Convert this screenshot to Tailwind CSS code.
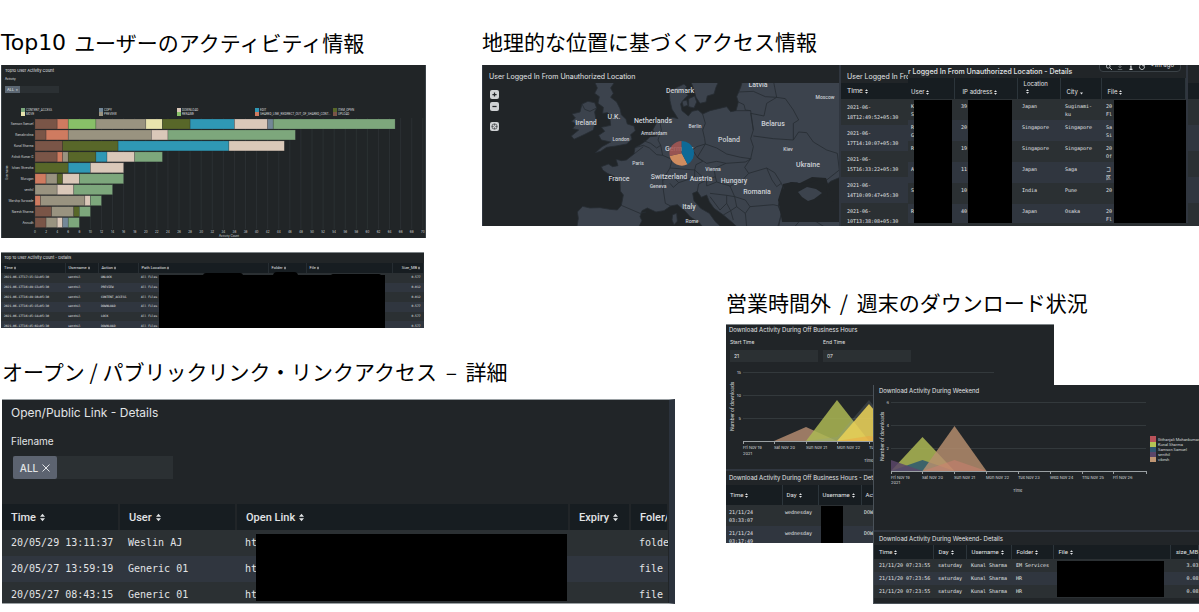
<!DOCTYPE html>
<html lang="ja">
<head>
<meta charset="utf-8">
<title>アクティビティ ダッシュボード</title>
<script src="https://cdn.jsdelivr.net/npm/@tailwindcss/browser@4"></script>
</head>
<body class="bg-white font-['Inter','Noto_Sans_CJK_JP',sans-serif] text-[#e2e4e6] overflow-x-hidden">
<svg class="hidden" aria-hidden="true">
  <symbol id="sort" viewBox="0 0 6 10"><path d="M0 4 3 0.500 6 4ZM0 6h6L3 9.500Z" fill="#e2e4e6"/></symbol>
  <symbol id="desc" viewBox="0 0 6 10"><path d="M0 5h6L3 9Z" fill="#e2e4e6"/></symbol>
</svg>
<main class="grid grid-cols-[482fr_244fr_473fr] grid-rows-[280px_64px_auto]">

  <!-- Top 10 user activity -->
  <section class="col-start-1 row-start-1 row-span-2 min-w-0 pt-5 pl-px pr-14">
    <h2 class="h-[45px] flex items-center text-[21px] leading-none text-black whitespace-nowrap gap-2"><span class="font-['DejaVu_Sans',sans-serif] text-[22px]">Top10</span> <span class="font-['Noto_Sans_CJK_JP',sans-serif]">ユーザーのアクティビティ情報</span></h2>
    <div class="bg-[#212527] border-x border-[#3b4247] h-[173px]">
      <div class="pl-[3px] pt-[3px] text-[4px] leading-[5px]">
        <h3>Top10 User Activity Count</h3>
        <label for="activity" class="block mt-1 text-[3px]">Activity</label>
        <div class="mt-1 w-[54px] h-[7px] bg-[#2b3033] flex">
          <button class="w-[15px] bg-[#5c6773] text-[4px] leading-none flex items-center justify-center gap-px shrink-0">ALL ×</button>
          <input id="activity" class="w-full min-w-0 bg-transparent outline-none">
        </div>
      </div>
      <svg id="bars" class="block w-full" viewBox="2 93 423 145" font-size="3" fill="#d5d8da"></svg>
    </div>

    <div class="relative mt-[14px] mr-[2px] h-[76px] bg-[#212527] border-t border-[#7e8487] overflow-hidden">
      <h3 class="h-[10px] pl-[3px] flex items-center text-[4px] leading-none">Top 10 User Activity Count - Details</h3>
      <table class="w-full h-[68px] table-fixed text-left text-[3px] leading-none font-['DejaVu_Sans_Mono',monospace] whitespace-nowrap [&_td]:px-[3px] [&_th]:px-[3px] [&_th]:font-normal [&_th]:border-r [&_th]:border-[#262d32] [&_tbody_tr:nth-child(odd)]:bg-[#2b3033] [&_tbody_tr:nth-child(even)]:bg-[#30363f]">
        <colgroup><col class="w-[64px]"><col class="w-[33px]"><col class="w-[40px]"><col class="w-[130px]"><col class="w-[38px]"><col class="w-[86px]"><col></colgroup>
        <thead class="bg-[#171d21] font-['Roboto',sans-serif] text-[4px]"><tr class="h-[10px]">
          <th><button class="flex gap-px items-center">Time<svg class="w-[2px] h-[4px]"><use href="#sort"/></svg></button></th>
          <th><button class="flex gap-px items-center">Username<svg class="w-[2px] h-[4px]"><use href="#sort"/></svg></button></th>
          <th><button class="flex gap-px items-center">Action<svg class="w-[2px] h-[4px]"><use href="#sort"/></svg></button></th>
          <th><button class="flex gap-px items-center">Path Location<svg class="w-[2px] h-[4px]"><use href="#sort"/></svg></button></th>
          <th><button class="flex gap-px items-center">Folder<svg class="w-[2px] h-[4px]"><use href="#sort"/></svg></button></th>
          <th><button class="flex gap-px items-center">File<svg class="w-[2px] h-[4px]"><use href="#sort"/></svg></button></th>
          <th><button class="flex gap-px items-center ml-auto">Size_MB<svg class="w-[2px] h-[4px]"><use href="#sort"/></svg></button></th>
        </tr></thead>
        <tbody>
          <tr><td>2021-06-17T17:15:32+05:30</td><td>senthil</td><td>UNLOCK</td><td>All Files</td><td></td><td></td><td class="text-right">0.577</td></tr>
          <tr><td>2021-06-17T16:49:13+05:30</td><td>senthil</td><td>PREVIEW</td><td>All Files</td><td></td><td></td><td class="text-right">0.012</td></tr>
          <tr><td>2021-06-17T16:49:10+05:30</td><td>senthil</td><td>CONTENT_ACCESS</td><td>All Files</td><td></td><td></td><td class="text-right">0.012</td></tr>
          <tr><td>2021-06-17T16:45:15+05:30</td><td>senthil</td><td>DOWNLOAD</td><td>All Files</td><td></td><td></td><td class="text-right">0.577</td></tr>
          <tr><td>2021-06-17T16:45:14+05:30</td><td>senthil</td><td>LOCK</td><td>All Files</td><td></td><td></td><td class="text-right">0.577</td></tr>
          <tr><td>2021-06-17T16:45:02+05:30</td><td>senthil</td><td>DOWNLOAD</td><td>All Files</td><td></td><td></td><td class="text-right">0.577</td></tr>
        </tbody>
      </table>
      <div class="absolute left-[158px] right-[39px] top-[22px] bottom-0 bg-black"></div>
      <div class="absolute left-[202px] w-[40px] top-[20px] h-[3px] rounded-t bg-black"></div>
      <div class="absolute left-[272px] w-[25px] top-[19px] h-[4px] rounded-t bg-black"></div>
      <div class="absolute left-[330px] w-[50px] top-[21px] h-[2px] rounded-t bg-black"></div>
    </div>
  </section>

  <!-- Access by geographic location -->
  <section class="col-start-2 col-span-2 row-start-1 min-w-0 pt-5">
    <h2 class="h-[45px] flex items-center text-[21px] leading-none text-black whitespace-nowrap">地理的な位置に基づくアクセス情報</h2>
    <div class="flex h-[161px] bg-[#30363f]">
      <div class="relative basis-1/2 bg-[#212528] border-x border-[#30363f] overflow-hidden">
        <h3 class="h-[18px] pl-1.5 pt-1 flex items-center text-[7px] leading-none">User Logged In From Unauthorized Location</h3>
        <svg class="block w-full font-['Roboto',sans-serif]" viewBox="483 83 356 143">
          <g transform="translate(560 80) scale(.33333)" fill="#3c434d" stroke="#272c33" stroke-width="2.5" stroke-linejoin="round">
            <path d="M50 445 55 415 52 396 68 379 90 384 120 383 150 388 172 390 184 376 190 345 181 333 180 302 160 288 142 280 128 270 124 260 145 252 158 260 174 257 168 238 185 242 199 240 222 222 225 203 240 195 258 182 270 170 292 168 278 150 290 128 312 118 338 112 354 116 344 100 336 88 330 62 328 40 345 25 372 12 380 20 372 35 385 45 372 58 362 72 366 92 385 108 396 94 414 90 428 102 450 92 475 86 500 80 512 95 528 92 535 66 530 50 542 22 548 0H845V290L812 304 796 318 776 328 792 335 800 330 812 345 830 360 845 390V445H652L664 402 655 376 664 350 672 328 690 310 712 308 722 318 700 330 722 344 738 358 758 352 775 345 764 335 745 325 780 310 800 300 770 305 735 322 714 310 690 308 674 326 664 352 655 378 664 402 655 445H536L514 425 490 405 462 385 448 365 440 345 424 352 412 334 398 340 402 362 422 385 448 400 466 425 488 445H432L416 426 392 412 374 392 352 374 332 378 312 392 288 396 262 384 246 392 240 410 246 422 234 445Z"/>
            <path d="M104 6H164L152 24 160 40 152 52 170 66 180 86 184 104 198 118 202 132 222 138 226 152 212 164 216 178 200 192 168 198 140 202 122 214 106 218 126 200 152 186 124 180 116 166 134 154 124 142 152 136 150 118 158 110 142 98 128 100 130 82 114 70 118 50 104 40 112 24Z"/>
            <path d="M66 72 84 64 104 68 110 84 104 96 108 120 100 150 72 164 42 178 34 168 56 150 38 146 48 132 34 124 46 114 36 102 60 96Z"/>
            <path d="M392 4H476L468 22 462 42 442 48 438 66 420 70 408 52 402 30ZM386 56 404 48 410 66 402 84 386 80ZM366 64 380 60 384 76 370 80ZM338 404 350 400 352 424 342 434 336 420ZM700 445 718 424 744 416 770 426 800 445Z"/>
          </g>
          <path d="M796 185 812 177 826 178 830 190 839 200V210L822 205 806 200 800 208 786 204 780 195Z" fill="#212528"/>
          <path d="M783 184 792 182 806 184 818 180 826 186 828 197 839 206V222H782L780 210 778 200Z" fill="#212528"/>
          <path d="M798 192 807 187 816 189 822 193 814 199 808 201 802 197Z" fill="#3c434d"/>
          <g transform="translate(560 80) scale(.33333)" fill="none" stroke="#272c33" stroke-width="2.5" stroke-linejoin="round">
            <path d="M428 102 436 130 428 150 434 176 436 192 410 200 398 210 412 232 428 244 408 254 404 270 330 264 336 238 308 226 302 196 294 180 304 150 300 128M436 192 470 204 500 222 542 232 572 236 580 200 572 176 580 150 572 92 528 92M436 192 412 232 440 250 470 244 498 250 556 246 574 236M404 270 420 284 440 300 466 290 462 266 498 250M466 290 470 306 510 318 548 300 566 280 554 262 572 236M440 300 416 312 412 334M440 300 440 318 470 306M510 318 524 350 556 360 570 380 640 374 656 378M566 280 620 264 644 278 664 310 672 328M620 264 636 300 650 320 664 310M580 168 640 176 700 180 716 156 740 158 760 186 800 210 832 220 838 270 800 300M580 150 572 100 612 108 620 70 650 52 676 56 700 90 716 120 700 130 700 180M535 36 580 34 616 50 650 52 644 22 640 0M535 66 552 74 556 90 572 92M225 203 250 196 268 204 290 224 308 226M250 182 272 190 290 204 302 196M222 222 250 200M330 264 308 300 310 330 316 370 332 378M308 300 340 292 356 308 380 300 404 290 404 270M356 308 340 322 330 310M184 376 240 400 258 396M110 84 90 94 74 88 66 72M450 340 500 346 500 370 480 390 450 350M524 350 500 346M500 370 512 392 490 405M512 392 530 380 556 400 560 440M530 380 524 350M556 400 570 380M512 392 520 420"/>
          </g>
          <g font-weight="500" font-size="7" text-anchor="middle" fill="#cdd1d6">
            <text x="680" y="93">Denmark</text><text x="758" y="87">Latvia</text>
            <text x="586" y="125">Ireland</text><text x="614" y="119">U.K.</text>
            <text x="653" y="123">Netherlands</text><text x="773" y="126">Belarus</text>
            <text x="729" y="142">Poland</text><text x="679" y="151">Germany</text>
            <text x="808" y="167">Ukraine</text><text x="619" y="181">France</text>
            <text x="669" y="179">Switzerland</text><text x="701" y="181">Austria</text>
            <text x="734" y="183">Hungary</text><text x="757" y="194">Romania</text>
            <text x="689" y="209">Italy</text>
            <g font-size="5">
              <text x="825" y="99">Moscow</text><text x="695" y="128">Berlin</text><text x="654" y="135">Amsterdam</text>
              <text x="621" y="141">London</text><text x="638" y="165">Paris</text><text x="788" y="151">Kiev</text>
              <text x="713" y="171">Vienna</text><text x="658" y="188">Geneva</text><text x="692" y="223">Rome</text>
            </g>
          </g>
          <path d="M681.700 153.300 687.500 164.200A12.300 12.300 0 0 1 669.700 156Z" fill="#cf8c5f"/>
          <path d="M681.700 153.300 669.700 156A12.300 12.300 0 0 1 681.700 141Z" fill="#a55753" fill-opacity=".88"/>
          <path d="M681.700 153.300V141A12.300 12.300 0 0 1 687.500 164.200Z" fill="#0e6a97"/>
        </svg>
        <div class="absolute left-[7px] top-[25px] flex flex-col gap-[3px]">
          <button aria-label="Zoom in" class="size-[9px] rounded-xs bg-[#cfd2d4] flex items-center justify-center"><svg class="size-[5px]" viewBox="0 0 6 6"><path d="M3 .5v5M.5 3h5" stroke="#212528" stroke-width="1.500"/></svg></button>
          <button aria-label="Zoom out" class="size-[9px] rounded-xs bg-[#cfd2d4] flex items-center justify-center"><svg class="size-[5px]" viewBox="0 0 6 6"><path d="M.5 3h5" stroke="#212528" stroke-width="1.500"/></svg></button>
          <button aria-label="Reset view" class="mt-[8px] size-[9px] rounded-xs bg-[#cfd2d4] flex items-center justify-center"><svg class="size-[7px]" viewBox="0 0 8 8" fill="none" stroke="#212528"><circle cx="4" cy="4" r="3" stroke-width=".7"/><path d="M4 1v2M4 5v2M1 4h2M5 4h2" stroke-width=".7"/></svg></button>
        </div>
      </div>

      <div class="relative basis-1/2 ml-px bg-[#212528] overflow-hidden">
        <h3 class="h-[18px] pl-[6px] pt-1 flex items-center text-[7px] leading-none whitespace-nowrap">User Logged In From</h3>
        <table class="w-full table-fixed text-left text-[5px] leading-[10px] font-['DejaVu_Sans_Mono',monospace] [&_td]:pl-[6px] [&_td]:align-top [&_td]:pt-[3px] [&_tbody_tr]:h-[26px] [&_tbody_tr:nth-child(odd)]:bg-[#2b3033] [&_tbody_tr:nth-child(even)]:bg-[#30363f]">
          <thead class="bg-[#171d21] font-['Roboto',sans-serif] text-[7px]"><tr class="h-[16px]"><th class="pl-[6px] font-normal"><button class="flex gap-0.5 items-center leading-none">Time<svg class="w-[3px] h-[5px]"><use href="#sort"/></svg></button></th></tr></thead>
          <tbody>
            <tr><td>2021-06-<br>18T12:49:52+05:30</td></tr>
            <tr><td>2021-06-<br>17T14:10:07+05:30</td></tr>
            <tr><td>2021-06-<br>15T16:33:22+05:30</td></tr>
            <tr><td>2021-06-<br>14T10:09:47+05:30</td></tr>
            <tr><td>2021-06-<br>10T13:38:08+05:30</td></tr>
          </tbody>
        </table>
        <div class="absolute left-[67px] right-[11px] top-0 h-[158px] bg-[#212528] overflow-hidden border-r-2 border-[#30363f]">
          <h3 class="h-[13px] flex items-center text-[7px] leading-none font-medium whitespace-nowrap">r Logged In From Unauthorized Location - Details</h3>
          <div class="absolute right-[5px] -top-[8px] w-[82px] h-[15px] rounded-sm border border-[#3b4247] bg-[#1a1f22] px-1.5 flex items-center justify-between text-[6px] leading-none">
            <svg class="size-[6px] mt-1" viewBox="0 0 8 8" fill="none" stroke="#e2e4e6"><circle cx="3" cy="3" r="2.500"/><path d="m5 5 3 3"/></svg>
            <svg class="size-[6px] mt-1" viewBox="0 0 8 8" fill="none" stroke="#7e8487"><path d="M4 0v5M2 3l2 2 2-2M1 7.500h6"/></svg>
            <svg class="size-[6px] mt-1" viewBox="0 0 8 8" fill="none" stroke="#e2e4e6" stroke-width="1.500"><path d="M4 0v1.500M3 3h1v4M2 7.200h4"/></svg>
            <svg class="size-[6px] mt-1" viewBox="0 0 8 8" fill="none" stroke="#e2e4e6"><path d="M6 1a3.500 3.500 0 1 1-4 0M5 0v2.500h2.500"/></svg>
            <span>&lt;1m ago</span>
          </div>
          <table class="w-full table-fixed text-left text-[5px] leading-[8px] font-['DejaVu_Sans_Mono','Noto_Sans_CJK_JP',monospace] whitespace-nowrap [&_td]:pl-[5px] [&_td]:align-top [&_td]:pt-[3px] [&_td:first-child]:pl-[3px] [&_td:nth-child(2)]:pl-[7px] [&_th]:font-normal [&_th]:border-r [&_th]:border-[#2c353b] [&_th]:align-bottom [&_th]:pl-[6px] [&_th:first-child]:pl-[3px] [&_th:nth-child(2)]:pl-[8px] [&_th]:pb-[3px] [&_tbody_tr]:h-[21px] [&_tbody_tr:nth-child(odd)]:bg-[#2b3033] [&_tbody_tr:nth-child(even)]:bg-[#30363f]">
            <colgroup><col class="w-[46px]"><col class="w-[63px]"><col class="w-[43px]"><col class="w-[41px]"><col></colgroup>
            <thead class="bg-[#171d21] font-['Inter',sans-serif] text-[6px]"><tr class="h-[21px]">
              <th><button class="flex gap-0.5 items-center">User<svg class="w-[3px] h-[5px]"><use href="#sort"/></svg></button></th>
              <th><button class="flex gap-0.5 items-center">IP address<svg class="w-[3px] h-[5px]"><use href="#sort"/></svg></button></th>
              <th><button class="block text-left">Location<svg class="w-[3px] h-[5px] mt-[1px] ml-[2px] mb-[2px] block"><use href="#sort"/></svg></button></th>
              <th><button class="flex gap-0.5 items-center">City<svg class="w-[3px] h-[5px]"><use href="#desc"/></svg></button></th>
              <th><button class="flex gap-0.5 items-center">File<svg class="w-[3px] h-[5px]"><use href="#sort"/></svg></button></th>
            </tr></thead>
            <tbody>
              <tr><td>K<br>S</td><td>39</td><td>Japan</td><td>Suginami-<br>ku</td><td>20<br>Fl</td></tr>
              <tr><td>R<br>G</td><td>20</td><td>Singapore</td><td>Singapore</td><td>Sa<br>Si</td></tr>
              <tr><td>R</td><td>19</td><td>Singapore</td><td>Singapore</td><td>20<br>Of</td></tr>
              <tr><td>A</td><td>11</td><td>Japan</td><td>Saga</td><td>コ<br>区</td></tr>
              <tr><td>S</td><td>10</td><td>India</td><td>Pune</td><td>20</td></tr>
              <tr><td>R</td><td>40</td><td>Japan</td><td>Osaka</td><td>20<br>Fl</td></tr>
            </tbody>
          </table>
          <div class="absolute left-[6px] w-[38px] top-[35px] bottom-0 bg-black"></div>
          <div class="absolute left-[60px] w-[44px] top-[35px] bottom-0 bg-black"></div>
          <div class="absolute left-[206px] right-0 top-[35px] bottom-0 bg-black"></div>
        </div>
      </div>
    </div>
  </section>

  <!-- Open / public links -->
  <section class="col-start-1 col-span-2 row-start-3 min-w-0 pl-0.5 pr-[51px]">
    <h2 class="h-[55px] text-[21px] leading-[55px] font-['Noto_Sans_CJK_JP',sans-serif] text-black whitespace-nowrap">オープン / パブリックリンク・リンクアクセス<span class="mx-1"> – </span>詳細</h2>
    <div class="relative h-[205px] bg-[#212528] border-t border-b border-[#9aa0a3] border-r-[6px] border-r-[#2b323c] overflow-hidden">
      <div class="h-[104px] pl-[9px] pt-[6px] text-[10px] leading-[14px]">
        <h3 class="text-[12px]">Open/Public Link - Details</h3>
        <label for="filename" class="block mt-[14px]">Filename</label>
        <div class="mt-[8px] ml-0.5 w-[160px] h-[23px] bg-[#2b3033] flex">
          <button class="w-[44px] shrink-0 rounded-xs bg-[#5c6370] flex items-center justify-center gap-1 font-medium">ALL<svg class="size-[8px]" viewBox="0 0 8 8"><path d="m.5.5 7 7m0-7-7 7" stroke="#e2e4e6"/></svg></button>
          <input id="filename" class="w-full min-w-0 bg-transparent outline-none px-1">
        </div>
      </div>
      <table class="w-full table-fixed text-left text-[10px] leading-none font-['DejaVu_Sans_Mono',monospace] whitespace-nowrap [&_td]:pl-[9px] [&_th]:pl-[9px] [&_th]:font-medium [&_th]:border-r-2 [&_th]:border-[#212528] [&_tr]:h-[26px] [&_tbody_tr:nth-child(odd)]:bg-[#2b3033] [&_tbody_tr:nth-child(even)]:bg-[#30363f]">
        <colgroup><col class="w-[117px]"><col class="w-[117px]"><col><col class="w-[61px]"><col class="w-[38px]"></colgroup>
        <thead class="bg-[#171d21] font-['Roboto',sans-serif] text-[11px]"><tr>
          <th><button class="flex gap-1 items-center">Time<svg class="w-[5px] h-[9px]"><use href="#sort"/></svg></button></th>
          <th><button class="flex gap-1 items-center">User<svg class="w-[5px] h-[9px]"><use href="#sort"/></svg></button></th>
          <th><button class="flex gap-1 items-center">Open Link<svg class="w-[5px] h-[9px]"><use href="#sort"/></svg></button></th>
          <th><button class="flex gap-1 items-center">Expiry<svg class="w-[5px] h-[9px]"><use href="#sort"/></svg></button></th>
          <th class="overflow-hidden">Foler/</th>
        </tr></thead>
        <tbody>
          <tr><td>20/05/29 13:11:37</td><td>Weslin AJ</td><td>ht</td><td></td><td class="overflow-hidden">folde</td></tr>
          <tr><td>20/05/27 13:59:19</td><td>Generic 01</td><td>ht</td><td></td><td>file</td></tr>
          <tr><td>20/05/27 08:43:15</td><td>Generic 01</td><td>ht</td><td></td><td>file</td></tr>
        </tbody>
      </table>
      <div class="absolute left-[254px] right-[102px] top-[134px] bottom-[2px] bg-black"></div>
    </div>
  </section>

  <!-- Off-hours and weekend downloads -->
  <section class="relative col-start-3 row-start-2 row-span-2 min-w-0">
    <h2 class="h-[44px] text-[21px] leading-[44px] font-['Noto_Sans_CJK_JP',sans-serif] text-black whitespace-nowrap">営業時間外<span class="mx-1"> / </span>週末のダウンロード状況</h2>
    <div class="relative mr-[145px] h-[219px] bg-[#212528] border-t border-[#7e8487] overflow-hidden text-[6px] leading-none">
      <h3 class="h-[9px] pl-[3px] flex items-center">Download Activity During Off Business Hours</h3>
      <div class="flex gap-[5px] px-[4px] pt-[6px] mb-[4px] text-[5px]">
        <div class="w-[88px]"><label for="start" class="block h-[10px]">Start Time</label><input id="start" value="21" class="block w-full h-[12px] bg-[#2b3033] px-1"></div>
        <div class="w-[88px]"><label for="end" class="block h-[10px]">End Time</label><input id="end" value="07" class="block w-full h-[12px] bg-[#2b3033] px-1"></div>
      </div>
      <svg class="block w-full" viewBox="726 366 328 103" font-size="4" fill="#d5d8da">
        <path d="M743 372.500h251M743 395.500h251M743 418.500h251" stroke="#33393c"/>
        <path d="M774 441 806 427 837 441Z" fill="#a8846a" fill-opacity=".9"/>
        <path d="M806 441 837 400 869 441Z" fill="#adb954" fill-opacity=".85"/>
        <path d="M806 441 837 437 869 400 900 441Z" fill="#8a99a0" fill-opacity=".2"/>
        <path d="M837 441 869 404 900 441Z" fill="#e8cf57" fill-opacity=".88"/>
        <path d="M837 441 869 436 900 441Z" fill="#eda63f" fill-opacity=".5"/>
        <path d="M743 441.500h251M743.500 441v3M774.500 441v3M806.500 441v3M837.500 441v3M869.500 441v3" stroke="#9aa0a3"/>
        <g text-anchor="end"><text x="741" y="374">15</text><text x="741" y="397">10</text><text x="741" y="420">5</text></g>
        <text x="743" y="449">Fri Nov 19</text><text x="743" y="455">2021</text><text x="774" y="449">Sat Nov 20</text><text x="806" y="449">Sun Nov 21</text><text x="837" y="449">Mon Nov 22</text><text x="869" y="449">Tu</text>
        <text x="864" y="462">Time</text>
        <text transform="translate(734 431) rotate(-90)" font-family="Roboto" font-size="5">Number of downloads</text>
      </svg>
      <div class="border-t-2 border-[#30363f]">
        <h3 class="h-[14px] pl-[3px] flex items-center">Download Activity During Off Business Hours - Details</h3>
        <table class="w-full table-fixed text-left text-[5px] leading-[8px] font-['DejaVu_Sans_Mono',monospace] whitespace-nowrap [&_td]:pl-[3px] [&_td]:align-top [&_td]:pt-[3px] [&_th]:pl-[4px] [&_th]:font-normal [&_th]:border-r [&_th]:border-[#2c353b] [&_tbody_tr]:h-[21px] [&_tbody_tr:nth-child(odd)]:bg-[#2b3033] [&_tbody_tr:nth-child(even)]:bg-[#30363f]">
          <colgroup><col class="w-[56px]"><col class="w-[36px]"><col class="w-[43px]"><col></colgroup>
          <thead class="bg-[#171d21] font-['Roboto',sans-serif] text-[6px]"><tr class="h-[20px]">
            <th><button class="flex gap-0.5 items-center">Time<svg class="w-[3px] h-[5px]"><use href="#sort"/></svg></button></th>
            <th><button class="flex gap-0.5 items-center">Day<svg class="w-[3px] h-[5px]"><use href="#sort"/></svg></button></th>
            <th><button class="flex gap-0.5 items-center">Username<svg class="w-[3px] h-[5px]"><use href="#sort"/></svg></button></th>
            <th><button class="flex gap-0.5 items-center">Action<svg class="w-[3px] h-[5px]"><use href="#sort"/></svg></button></th>
          </tr></thead>
          <tbody>
            <tr><td>21/11/24<br>03:33:07</td><td>wednesday</td><td></td><td>DOWNLOAD</td></tr>
            <tr><td>21/11/24<br>03:17:49</td><td>wednesday</td><td></td><td>DOWNLOAD</td></tr>
          </tbody>
        </table>
      </div>
      <div class="absolute left-[95px] w-[22px] bottom-0 h-[37px] bg-black"></div>
    </div>

    <div class="absolute left-[147px] right-0 top-[105px] h-[219px] bg-[#212528] border-l border-b border-[#4a5259] overflow-hidden text-[6px] leading-none">
      <h3 class="h-[11px] pl-[5px] flex items-center">Download Activity During Weekend</h3>
      <svg class="block w-full" viewBox="874 396 325 134" font-size="4" fill="#d5d8da">
        <path d="M891 402.500h255M891 425.500h255M891 448.500h255" stroke="#33393c"/>
        <path d="M891 471 922.500 437 954.500 471Z" fill="#adb954" fill-opacity=".85"/>
        <path d="M891 471 922.500 460 954.500 471Z" fill="#2c5870" fill-opacity=".85"/>
        <path d="M891 460 922.500 471H891Z" fill="#5b4669" fill-opacity=".85"/>
        <path d="M922.500 471 954.500 426 986.500 471Z" fill="#b8906f" fill-opacity=".82"/>
        <path d="M922.500 471 954.500 460 986.500 471Z" fill="#d08070" fill-opacity=".5"/>
        <path d="M891 471.500h256M891.500 471v3M922.500 471v3M954.500 471v3M986.500 471v3M1018.500 471v3M1050.500 471v3M1082.500 471v3M1113.500 471v3M1146.500 471v3" stroke="#9aa0a3"/>
        <g text-anchor="end"><text x="889" y="404">6</text><text x="889" y="427">4</text><text x="889" y="450">2</text></g>
        <text x="891" y="479">Fri Nov 19</text><text x="891" y="484">2021</text><text x="922" y="479">Sat Nov 20</text><text x="954" y="479">Sun Nov 21</text><text x="986" y="479">Mon Nov 22</text><text x="1018" y="479">Tue Nov 23</text><text x="1050" y="479">Wed Nov 24</text><text x="1082" y="479">Thu Nov 25</text><text x="1113" y="479">Fri Nov 26</text>
        <text x="1013" y="492">Time</text>
        <text transform="translate(884 461) rotate(-90)" font-family="Roboto" font-size="5">Number of downloads</text>
        <path d="M1150 436h6v6h-6z" fill="#b9525a"/><path d="M1150 442h6v5h-6z" fill="#b5c455"/><path d="M1150 447h6v5h-6z" fill="#2f5570"/><path d="M1150 452h6v5h-6z" fill="#5b4669"/><path d="M1150 457h6v5h-6z" fill="#c09673"/>
        <g font-family="Roboto"><text x="1158" y="441">Githanjali Mohankumar</text><text x="1158" y="446">Kunal Sharma</text><text x="1158" y="451">Samson Samuel</text><text x="1158" y="456">senthil</text><text x="1158" y="461">vikesh</text></g>
      </svg>
      <div class="border-t-2 border-[#30363f]">
        <h3 class="h-[13px] pl-[5px] flex items-center">Download Activity During Weekend- Details</h3>
        <table class="w-full table-fixed text-left text-[5px] leading-none font-['DejaVu_Sans_Mono',monospace] whitespace-nowrap [&_td]:pl-[5px] [&_th]:pl-[5px] [&_th]:font-normal [&_th]:border-r [&_th]:border-[#2c353b] [&_tbody_tr]:h-[13px] [&_tbody_tr:nth-child(odd)]:bg-[#2b3033] [&_tbody_tr:nth-child(even)]:bg-[#30363f]">
          <colgroup><col class="w-[59px]"><col class="w-[33px]"><col class="w-[45px]"><col class="w-[42px]"><col><col class="w-[28px]"></colgroup>
          <thead class="bg-[#171d21] font-['Roboto',sans-serif] text-[6px]"><tr class="h-[14px]">
            <th><button class="flex gap-0.5 items-center">Time<svg class="w-[3px] h-[5px]"><use href="#sort"/></svg></button></th>
            <th><button class="flex gap-0.5 items-center">Day<svg class="w-[3px] h-[5px]"><use href="#sort"/></svg></button></th>
            <th><button class="flex gap-0.5 items-center">Username<svg class="w-[3px] h-[5px]"><use href="#sort"/></svg></button></th>
            <th><button class="flex gap-0.5 items-center">Folder<svg class="w-[3px] h-[5px]"><use href="#sort"/></svg></button></th>
            <th><button class="flex gap-0.5 items-center">File<svg class="w-[3px] h-[5px]"><use href="#sort"/></svg></button></th>
            <th>size_MB</th>
          </tr></thead>
          <tbody>
            <tr><td>21/11/20 07:23:55</td><td>saturday</td><td>Kunal Sharma</td><td>EM Services</td><td></td><td class="text-right">3.03</td></tr>
            <tr><td>21/11/20 07:23:56</td><td>saturday</td><td>Kunal Sharma</td><td>HR</td><td></td><td class="text-right">0.08</td></tr>
            <tr><td>21/11/20 07:23:55</td><td>saturday</td><td>Kunal Sharma</td><td>HR</td><td></td><td class="text-right">0.08</td></tr>
          </tbody>
        </table>
      </div>
      <div class="absolute left-[183px] right-[35px] bottom-[6px] h-[36px] bg-black"></div>
    </div>
  </section>
</main>

<script>
// Stacked horizontal bars: each row lists [action index, count] pairs.
const actions = [
  ['CONTENT_ACCESS', '#7da77c'], ['MOVE', '#e8e4ae'], ['COPY', '#738797'], ['PREVIEW', '#999380'],
  ['DOWNLOAD', '#dac8b9'], ['RENAME', '#88c068'], ['EDIT', '#2f98b5'],
  ['SHARED_LINK_REDIRECT_OUT_OF_SHARED_CONT...', '#cf7b60'], ['ITEM_OPEN', '#586729'], ['UPLOAD', '#7a5547']
];
const users = [
  ['Samson Samuel', [[9,4],[7,2],[5,5],[3,9],[1,3],[8,5],[6,8],[4,6],[2,1],[0,22]]],
  ['Ramakrishna', [[9,2],[7,4],[3,15],[4,3],[0,23]]],
  ['Kunal Sharma', [[9,5],[8,10],[6,20],[4,10]]],
  ['Ashok Kumar G', [[9,4],[7,1],[3,1],[8,5],[6,2],[4,5],[0,5]]],
  ['Ishani Shrestha', [[8,6],[6,4],[4,6]]],
  ['Murugan', [[7,2],[3,2],[8,1],[4,3],[0,8]]],
  ['senthil', [[3,4],[4,3],[0,7]]],
  ['Warship Surwade', [[7,1],[3,8],[4,1],[0,2]]],
  ['Naresh Sharma', [[9,3],[3,4],[8,1],[0,2]]],
  ['Anirudh', [[9,2],[3,2],[4,1],[2,1],[0,2]]]
];
const unit = 5.54, left = 35;
let out = '';
for (let n = 0; n <= 70; n += 2) {
  const x = left + n * unit;
  out += `<path d="M${x} 118V229" stroke="#2f3538" stroke-width=".7"/><text x="${x}" y="232.500" text-anchor="middle">${n}</text>`;
}
users.forEach(([name, parts], row) => {
  const y = 119 + row * 10.95;
  let n = 0;
  out += `<text x="33.500" y="${y + 6}" text-anchor="end">${name}</text>`;
  for (const [a, count] of parts) {
    out += `<rect x="${left + n * unit}" y="${y}" width="${count * unit}" height="10" fill="${actions[a][1]}" stroke="#212527" stroke-opacity=".35" stroke-width=".6"/>`;
    n += count;
  }
});
actions.forEach(([name, color], i) => {
  // SHARED_LINK and EDIT share the fourth column, as all pairs do.
  const x = 21 + (i >> 1) * 78, y = 108 + (i % 2) * 4;
  out += `<rect x="${x}" y="${y}" width="4" height="4" fill="${color}"/><text x="${x + 5}" y="${y + 3.200}" font-family="Roboto">${name}</text>`;
});
out += '<text x="229" y="237" text-anchor="middle">Activity Count</text><text transform="translate(8 180) rotate(-90)">Username</text>';
document.getElementById('bars').innerHTML = out;
</script>
</body>
</html>
